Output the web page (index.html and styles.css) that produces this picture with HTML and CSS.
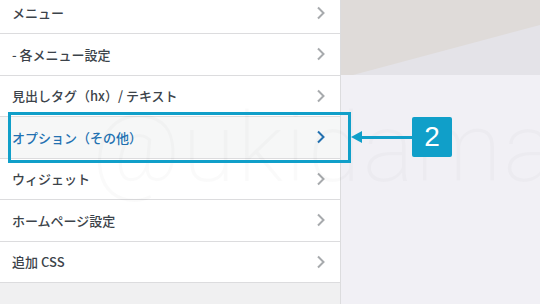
FILE: index.html
```html
<!DOCTYPE html>
<html lang="ja">

<head>
    <meta charset="UTF-8">
    <meta name="viewport" content="width=device-width, initial-scale=1.0">
    <title>カスタマイズ</title>
    <link rel="stylesheet" href="styles.css">
</head>

<body>
    <div class="page">
        <div class="panel">
            <ul class="menu">
                <li class="row"><span>メニュー</span><svg class="chev" viewBox="0 0 10 14"><polyline points="2,1.5 7.5,7 2,12.5"/></svg></li>
                <li class="row"><span>- 各メニュー設定</span><svg class="chev" viewBox="0 0 10 14"><polyline points="2,1.5 7.5,7 2,12.5"/></svg></li>
                <li class="row"><span>見出しタグ（hx）/ テキスト</span><svg class="chev" viewBox="0 0 10 14"><polyline points="2,1.5 7.5,7 2,12.5"/></svg></li>
                <li class="row active"><span>オプション（その他）</span><svg class="chev" viewBox="0 0 10 14"><polyline points="2,1.5 7.5,7 2,12.5"/></svg></li>
                <li class="row"><span>ウィジェット</span><svg class="chev" viewBox="0 0 10 14"><polyline points="2,1.5 7.5,7 2,12.5"/></svg></li>
                <li class="row"><span>ホームページ設定</span><svg class="chev" viewBox="0 0 10 14"><polyline points="2,1.5 7.5,7 2,12.5"/></svg></li>
                <li class="row"><span>追加 CSS</span><svg class="chev" viewBox="0 0 10 14"><polyline points="2,1.5 7.5,7 2,12.5"/></svg></li>
            </ul>
        </div>
        <div class="preview">
            <div class="preview-top"></div>
        </div>

        <div class="watermark">@ukidama</div>
        <div class="frame"></div>
        <div class="callout">
            <div class="arrow-head"></div>
            <div class="arrow-line"></div>
            <div class="badge">2</div>
        </div>
    </div>
</body>

</html>
```

FILE: styles.css
```css
body{
    margin: 0;
    font-family: "Noto Sans CJK JP", "Noto Sans", sans-serif;
}
.page{
    position: relative;
    display: flex;
    width: 540px;
    height: 304px;
    overflow: hidden;
    background-color: #f1f0f5;
}
.panel{
    width: 340px;
    border-right: 1px solid #dcdcde;
    background-color: #f0f0f1;
}
.menu{
    list-style: none;
    margin: -7.5px 0 0 0;
    padding: 0;
}
.row{
    display: flex;
    align-items: center;
    justify-content: space-between;
    height: 40.5px;
    padding: 0 14px 0 12px;
    border-bottom: 1px solid #dcdcde;
    background-color: #fff;
    color: #3c434a;
    font-size: 13px;
    font-weight: 500;
}
.row.active{
    background-color: #f6f7f7;
    color: #2271b1;
}
.chev{
    width: 10px;
    height: 14px;
    fill: none;
    stroke: #a7aaad;
    stroke-width: 2;
}
.active .chev{
    stroke: #2271b1;
}
.preview{
    flex: 1;
}
.preview-top{
    position: relative;
    height: 75px;
    background-color: #dfdbd9;
}
.preview-top::after{
    content: "";
    position: absolute;
    inset: 0;
    background-color: #e4e3e8;
    clip-path: polygon(12px 100%, 100% 25px, 100% 100%);
}
.watermark{
    position: absolute;
    left: 92px;
    top: 92px;
    font-family: Roboto, sans-serif;
    font-weight: 200;
    font-size: 96px;
    letter-spacing: 2px;
    color: rgba(0, 0, 0, 0.02);
    pointer-events: none;
}
.frame{
    position: absolute;
    left: 8px;
    top: 112px;
    width: 337px;
    height: 45px;
    border: 3px solid #109fc9;
}
.callout{
    position: absolute;
    left: 351px;
    top: 117px;
    display: flex;
    align-items: center;
    height: 40px;
}
.arrow-head{
    width: 0;
    height: 0;
    border-top: 6px solid transparent;
    border-bottom: 6px solid transparent;
    border-right: 11px solid #109fc9;
}
.arrow-line{
    width: 50px;
    height: 3px;
    background-color: #109fc9;
}
.badge{
    width: 40px;
    height: 40px;
    border-radius: 2px;
    background-color: #109fc9;
    color: #fff;
    font-family: "Liberation Sans", Arial, sans-serif;
    font-size: 28px;
    line-height: 40px;
    text-align: center;
}
```
